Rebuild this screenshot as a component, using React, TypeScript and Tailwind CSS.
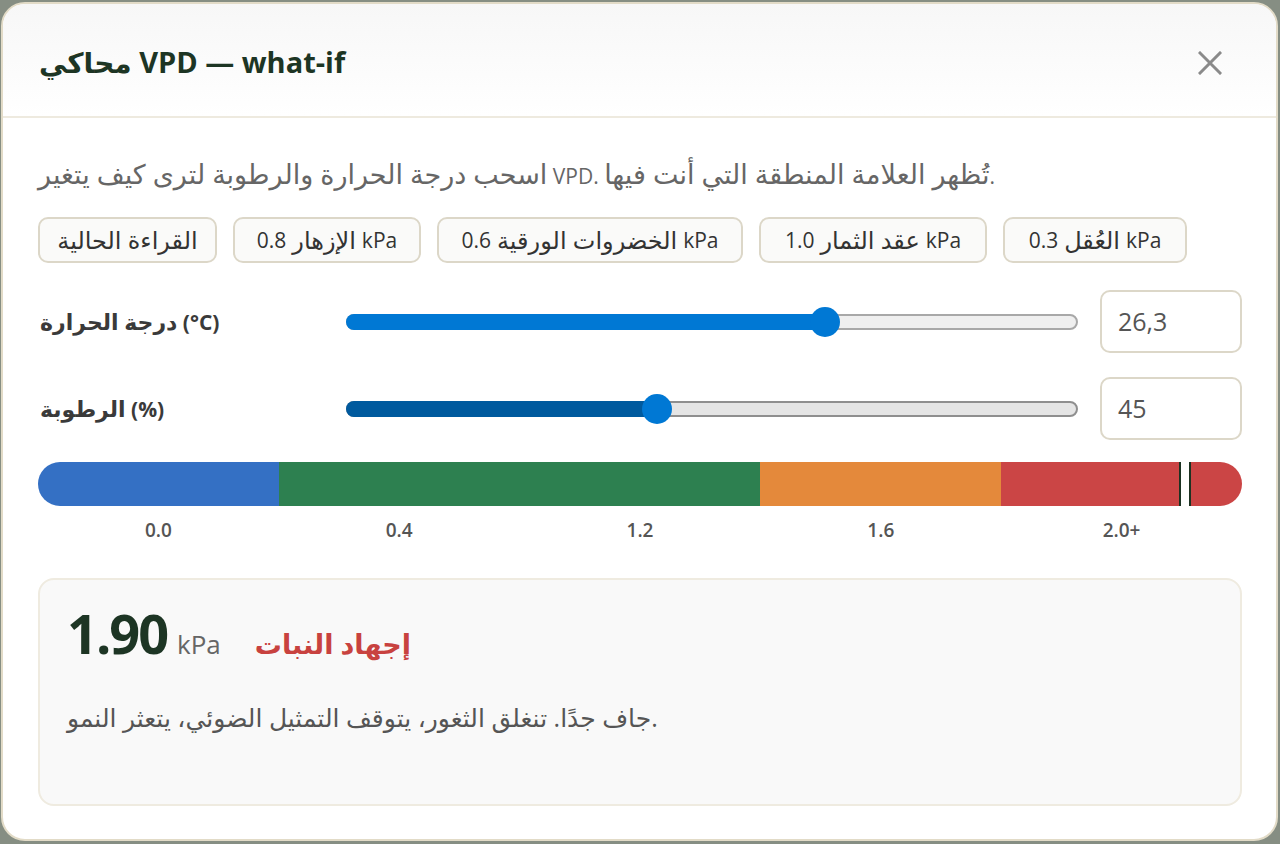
import React from "react";

const FONT = '"Open Sans", "Noto Sans", "DejaVu Sans", sans-serif';

function Slider({ pct, fill, track, border }: { pct: number; fill: string; track: string; border: string }) {
  return (
    <div className="relative flex-1 h-[30px] flex items-center">
      <div className={`relative w-full h-[16px] rounded-full border-2 ${track} ${border}`}>
        <div className={`absolute left-[-2px] top-[-2px] bottom-[-2px] rounded-full ${fill}`} style={{ width: `calc(${pct}% + 2px)` }} />
      </div>
      <div
        className="absolute top-0 w-[30px] h-[30px] rounded-full bg-[#0078d4] -translate-x-1/2"
        style={{ left: `${pct}%` }}
      />
    </div>
  );
}

function Preset({ ar, value, w }: { ar: string; value?: string; w: string }) {
  return (
    <button
      className={`${w} h-[46px] shrink-0 rounded-[10px] border-2 border-[#dcd7c8] bg-[#fafaf9] text-[21px] text-[#333] leading-none whitespace-nowrap flex items-center justify-center gap-[6px]`}
    >
      {value ? <span>{value}</span> : null}
      <span className="text-[24px]">{ar}</span>
      {value ? <span>kPa</span> : null}
    </button>
  );
}

export default function App() {
  return (
    <div className="w-[1280px] h-[844px] bg-[#868e83] pt-[2px] pl-[1px] pr-[2px] pb-[3px] overflow-hidden" style={{ fontFamily: FONT }}>
      <div className="h-full rounded-[24px] bg-white border-2 border-[#e2dbc7] flex flex-col overflow-hidden">
        <div className="h-[114px] shrink-0 flex items-center justify-between pl-[36px] pr-[54px] bg-gradient-to-b from-[#f7f7f7] to-white border-b-2 border-[#eeeadf]">
          <h1 className="text-[29px] font-bold text-[#1d3524] leading-none pt-[2px]">
            <span className="text-[28px]">محاكي</span> VPD — what-if
          </h1>
          <svg width="24" height="24" viewBox="0 0 24 24" className="mt-[6px]">
            <path d="M2 2 L22 22 M22 2 L2 22" stroke="#8a8a8a" strokeWidth="3" strokeLinecap="square" />
          </svg>
        </div>
        <div className="pl-[35px] pr-[34px]">
          <p className="pt-[41px] h-[71px] text-[21px] leading-[30px] text-[#666] whitespace-nowrap">
            <span className="text-[27px]">اسحب درجة الحرارة والرطوبة لترى كيف يتغير</span> VPD.{" "}
            <span className="text-[27px]">تُظهر العلامة المنطقة التي أنت فيها</span>.
          </p>
          <div className="mt-[28px] flex gap-4">
            <Preset ar="القراءة الحالية" w="w-[179px]" />
            <Preset ar="الإزهار" value="0.8" w="w-[188px]" />
            <Preset ar="الخضروات الورقية" value="0.6" w="w-[306px]" />
            <Preset ar="عقد الثمار" value="1.0" w="w-[228px]" />
            <Preset ar="العُقل" value="0.3" w="w-[184px]" />
          </div>

          <div className="mt-[27px] flex items-center h-[63px]">
            <div className="w-[308px] text-[21px] font-bold text-[#3a3a3a] pl-[2px] whitespace-nowrap">
              <span className="text-[22px]">درجة الحرارة</span> (°C)
            </div>
            <Slider pct={65.4} fill="bg-[#0078d4]" track="bg-[#efefef]" border="border-[#a8a8a8]" />
            <div className="ml-[22px] w-[142px] h-[63px] rounded-[10px] border-2 border-[#dcd7c8] flex items-center pl-[16px] text-[25px] text-[#555]">
              26,3
            </div>
          </div>
          <div className="mt-[24px] flex items-center h-[63px]">
            <div className="w-[308px] text-[21px] font-bold text-[#3a3a3a] pl-[2px] whitespace-nowrap">
              <span className="text-[22px]">الرطوبة</span> (%)
            </div>
            <Slider pct={42.5} fill="bg-[#005a9e]" track="bg-[#e5e5e5]" border="border-[#8f8f8f]" />
            <div className="ml-[22px] w-[142px] h-[63px] rounded-[10px] border-2 border-[#dcd7c8] flex items-center pl-[16px] text-[25px] text-[#555]">
              45
            </div>
          </div>

          <div className="mt-[22px] relative h-[44px] rounded-full overflow-hidden flex">
            <div className="flex-1 bg-[#3470c4]" />
            <div className="flex-[2] bg-[#2d8050]" />
            <div className="flex-1 bg-[#e4893b]" />
            <div className="flex-1 bg-[#cb4545]" />
            <div className="absolute top-0 bottom-0 left-[95.3%] w-[12px] -translate-x-1/2 bg-white border-x-2 border-[#1c3322]" />
          </div>
          <div className="mt-[12px] grid grid-cols-5 text-center text-[19px] font-semibold text-[#555] leading-[24px]">
            <span>0.0</span>
            <span>0.4</span>
            <span>1.2</span>
            <span>1.6</span>
            <span>2.0+</span>
          </div>

          <div className="mt-[36px] h-[228px] rounded-[16px] border-2 border-[#efebe0] bg-[#f9f9f9] pl-[27px] pt-[26px]">
            <div className="flex items-baseline">
              <span className="text-[54px] font-bold text-[#1d3524] leading-none tracking-[-2px]">1.90</span>
              <span className="ml-[10px] text-[26px] text-[#666]">kPa</span>
              <span className="ml-[34px] text-[27px] font-semibold text-[#c8423f]">إجهاد النبات</span>
            </div>
            <p className="mt-[36px] text-[25px] leading-[32px] text-[#555] whitespace-nowrap">
              جاف جدًا. تنغلق الثغور، يتوقف التمثيل الضوئي، يتعثر النمو.
            </p>
          </div>
        </div>
      </div>
    </div>
  );
}
